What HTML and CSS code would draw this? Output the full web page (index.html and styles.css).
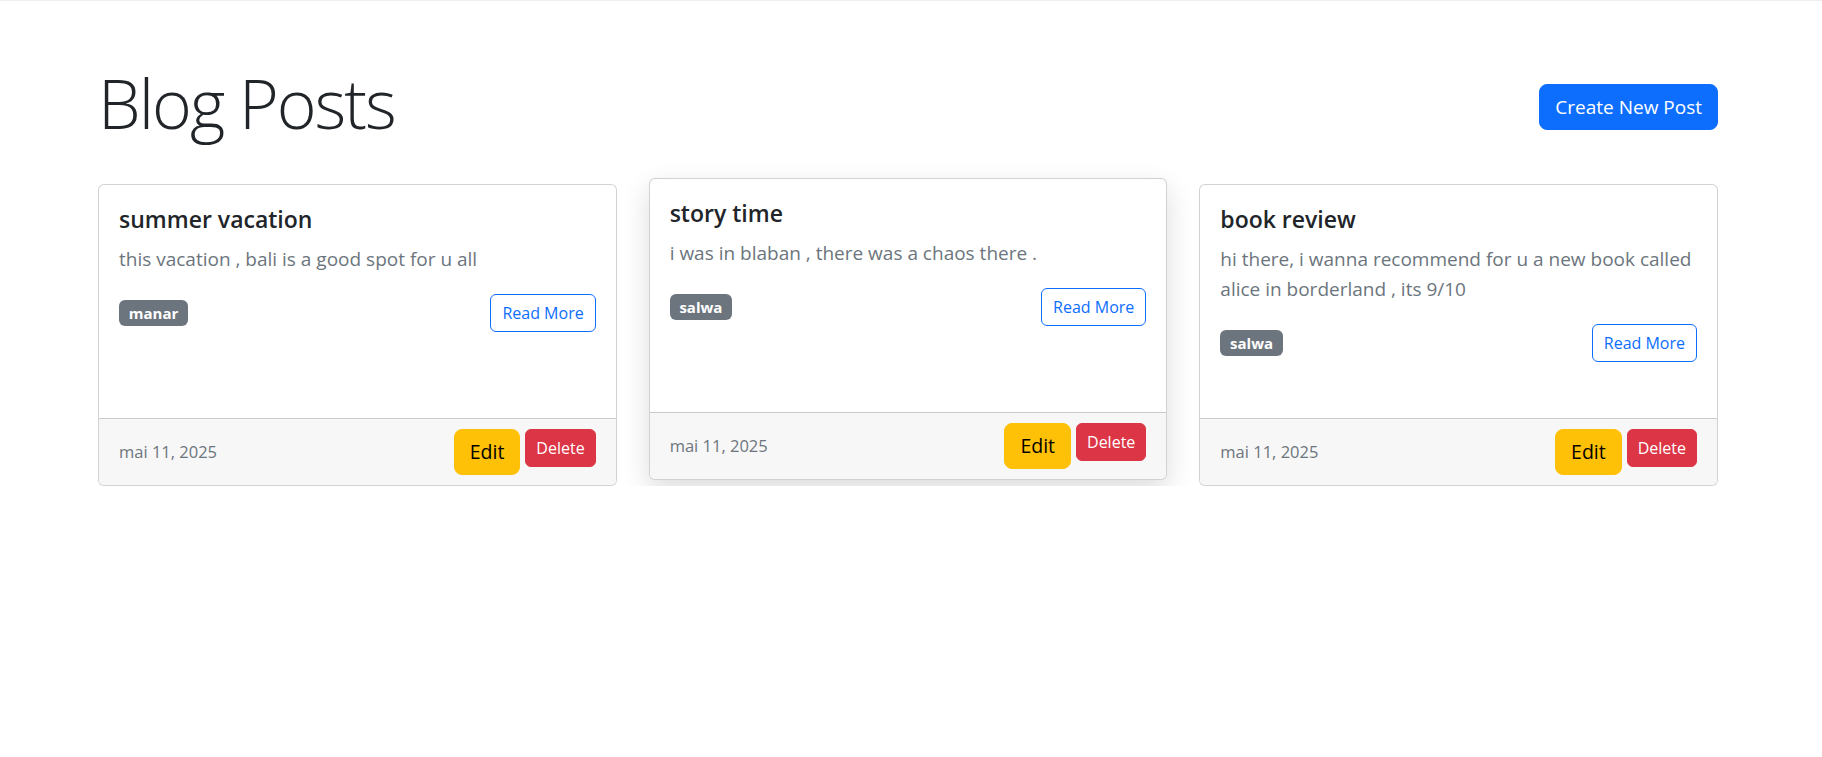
FILE: index.html
```html
<!DOCTYPE html>
<html lang="en">
<head>
<meta charset="utf-8">
<title>Blog Posts</title>
<link rel="stylesheet" href="styles.css">
</head>
<body>
<div class="topline"></div>
<main class="container">
  <header class="page-header">
    <h1 class="page-title">Blog Posts</h1>
    <a class="btn btn-primary btn-lg" href="#">Create New Post</a>
  </header>
  <section class="grid">
    <article class="card">
      <div class="card-body">
        <h4 class="card-title">summer vacation</h4>
        <p class="card-text">this vacation , bali is a good spot for u all</p>
        <div class="meta-row">
          <span class="badge">manar</span>
          <a class="btn btn-outline" href="#">Read More</a>
        </div>
      </div>
      <div class="card-footer">
        <span class="date">mai 11, 2025</span>
        <div class="actions">
          <a class="btn btn-warning btn-lg" href="#">Edit</a>
          <button class="btn btn-danger" type="button">Delete</button>
        </div>
      </div>
    </article>
    <article class="card card-hover">
      <div class="card-body">
        <h4 class="card-title">story time</h4>
        <p class="card-text">i was in blaban , there was a chaos there .</p>
        <div class="meta-row">
          <span class="badge">salwa</span>
          <a class="btn btn-outline" href="#">Read More</a>
        </div>
      </div>
      <div class="card-footer">
        <span class="date">mai 11, 2025</span>
        <div class="actions">
          <a class="btn btn-warning btn-lg" href="#">Edit</a>
          <button class="btn btn-danger" type="button">Delete</button>
        </div>
      </div>
    </article>
    <article class="card">
      <div class="card-body">
        <h4 class="card-title">book review</h4>
        <p class="card-text">hi there, i wanna recommend for u a new book called alice in borderland , its 9/10</p>
        <div class="meta-row">
          <span class="badge">salwa</span>
          <a class="btn btn-outline" href="#">Read More</a>
        </div>
      </div>
      <div class="card-footer">
        <span class="date">mai 11, 2025</span>
        <div class="actions">
          <a class="btn btn-warning btn-lg" href="#">Edit</a>
          <button class="btn btn-danger" type="button">Delete</button>
        </div>
      </div>
    </article>
  </section>
</main>
</body>
</html>
```
FILE: styles.css
```css
* { box-sizing: border-box; }
html, body { margin: 0; padding: 0; background: #fff; }
body {
  font-family: "Open Sans", "Noto Sans", sans-serif;
  font-size: 16px;
  line-height: 1.5;
  color: #212529;
}
.topline { height: 1px; background: #efefef; }

.container {
  width: 1620px;
  margin-left: 98px;
  padding-top: 63px;
}

.page-header {
  display: flex;
  justify-content: space-between;
  align-items: center;
  height: 86px;
  margin-bottom: 34px;
}
.page-title {
  margin: -4px 0 4px;
  font-size: 68px;
  font-weight: 300;
  line-height: 86px;
  letter-spacing: -2px;
  color: #212529;
}

.btn {
  display: inline-block;
  font-family: inherit;
  font-size: 16px;
  line-height: 24px;
  font-weight: 400;
  padding: 6px 11px;
  border: 1px solid transparent;
  border-radius: 6px;
  text-decoration: none;
  text-align: center;
  cursor: pointer;
  white-space: nowrap;
}
.btn-lg {
  font-size: 19px;
  line-height: 28px;
  padding: 8px 15px;
  border-radius: 8px;
}
.btn-primary { background: #0d6efd; border-color: #0d6efd; color: #fff; }
.btn-outline { background: #fff; border-color: #0d6efd; color: #0d6efd; }
.btn-warning { background: #ffc107; border-color: #ffc107; color: #000; font-size: 19.5px; }
.btn-danger { background: #dc3545; border-color: #dc3545; color: #fff; padding-left: 10px; padding-right: 10px; }

.grid {
  display: grid;
  grid-template-columns: repeat(3, 1fr);
  column-gap: 32px;
  align-items: start;
}

.card {
  display: flex;
  flex-direction: column;
  height: 302px;
  background: #fff;
  border: 1px solid rgba(0, 0, 0, 0.175);
  border-radius: 6px;
  overflow: hidden;
}
.card-hover {
  transform: translateY(-6px);
  box-shadow: 0 10px 28px rgba(0, 0, 0, 0.14);
}

.card-body {
  flex: 1;
  padding: 20px 20px 20px;
}
.card-title {
  margin: 0 0 10px;
  font-size: 23px;
  font-weight: 600;
  line-height: 29px;
  color: #212529;
}
.card-text {
  margin: 0 0 20px;
  font-size: 19px;
  line-height: 30px;
  color: #6c757d;
}
.meta-row {
  display: flex;
  justify-content: space-between;
  align-items: center;
}
.badge {
  display: inline-block;
  font-size: 15px;
  font-weight: 700;
  line-height: 1;
  color: #fff;
  background: #6c757d;
  padding: 5.25px 9.75px;
  border-radius: 6px;
}

.card-footer {
  display: flex;
  justify-content: space-between;
  align-items: center;
  padding: 10px 20px;
  background: #f7f7f7;
  border-top: 1px solid rgba(0, 0, 0, 0.175);
}
.date {
  font-size: 16.5px;
  color: #6c757d;
}
.actions {
  display: flex;
  align-items: flex-start;
  gap: 5px;
}
```
